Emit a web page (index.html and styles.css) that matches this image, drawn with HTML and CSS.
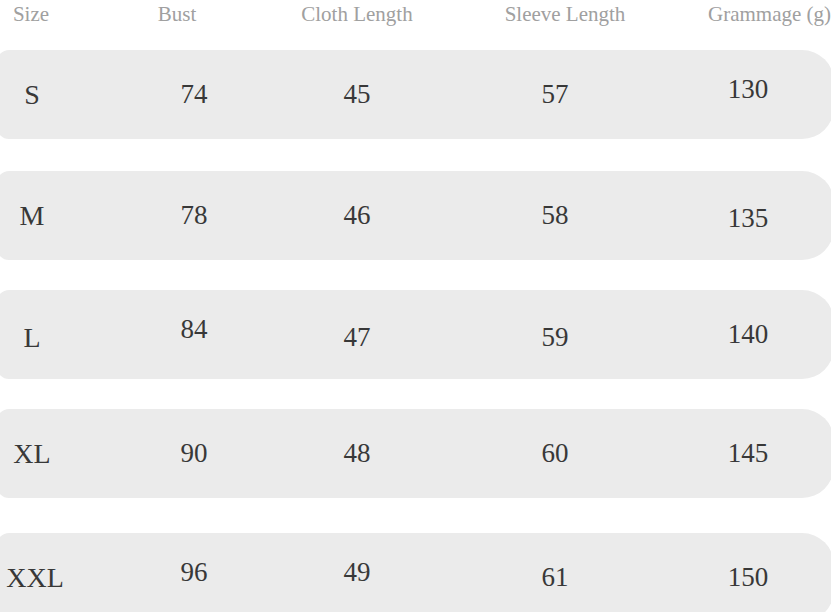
FILE: index.html
```html
<!DOCTYPE html>
<html lang="en">
<head>
<meta charset="utf-8">
<title>Size Chart</title>
<link rel="stylesheet" href="styles.css">
</head>
<body>
<div class="chart">
  <div class="head">
    <span>Size</span>
    <span>Bust</span>
    <span>Cloth Length</span>
    <span>Sleeve Length</span>
    <span>Grammage (g)</span>
  </div>
  <div class="rows">
    <div class="row">
      <span class="lbl">S</span><span>74</span><span>45</span><span>57</span><span class="up">130</span>
    </div>
    <div class="row second">
      <span class="lbl">M</span><span>78</span><span>46</span><span>58</span><span class="down">135</span>
    </div>
    <div class="row">
      <span class="lbl down">L</span><span class="up">84</span><span class="down">47</span><span class="down">59</span><span>140</span>
    </div>
    <div class="row">
      <span class="lbl">XL</span><span>90</span><span>48</span><span>60</span><span>145</span>
    </div>
    <div class="row last">
      <span class="lbl wide">XXL</span><span class="up">96</span><span class="up">49</span><span>61</span><span>150</span>
    </div>
  </div>
</div>
</body>
</html>
```

FILE: styles.css
```css
html, body {
  margin: 0;
  padding: 0;
  background: #ffffff;
  overflow: hidden;
}

.chart {
  width: 831px;
  font-family: "Liberation Serif", "Times New Roman", serif;
}

.head {
  display: grid;
  grid-template-columns: 62px 230px 130px 286px 123px;
  height: 28px;
  align-items: center;
  font-size: 21px;
  color: #a0a0a0;
  white-space: nowrap;
  margin-bottom: 22px;
}

.head span {
  text-align: center;
}

.rows {
  display: flex;
  flex-direction: column;
  gap: 30px;
}

.row {
  display: grid;
  grid-template-columns: 64px 260px 66px 330px 56px;
  align-items: center;
  height: 89px;
  margin-left: -3px;
  padding-left: 3px;
  width: 834px;
  background: #ebebeb;
  border-radius: 12px 32px 32px 12px;
  font-size: 27px;
  color: #383838;
  white-space: nowrap;
}

.row span {
  text-align: center;
  position: relative;
}

.row .lbl {
  font-size: 28px;
}

.row .wide {
  left: 3px;
}

.row.second {
  margin-top: 2px;
}

.row.last {
  margin-top: 5px;
}

.row .up {
  top: -5px;
}

.row .down {
  top: 3px;
}
```
